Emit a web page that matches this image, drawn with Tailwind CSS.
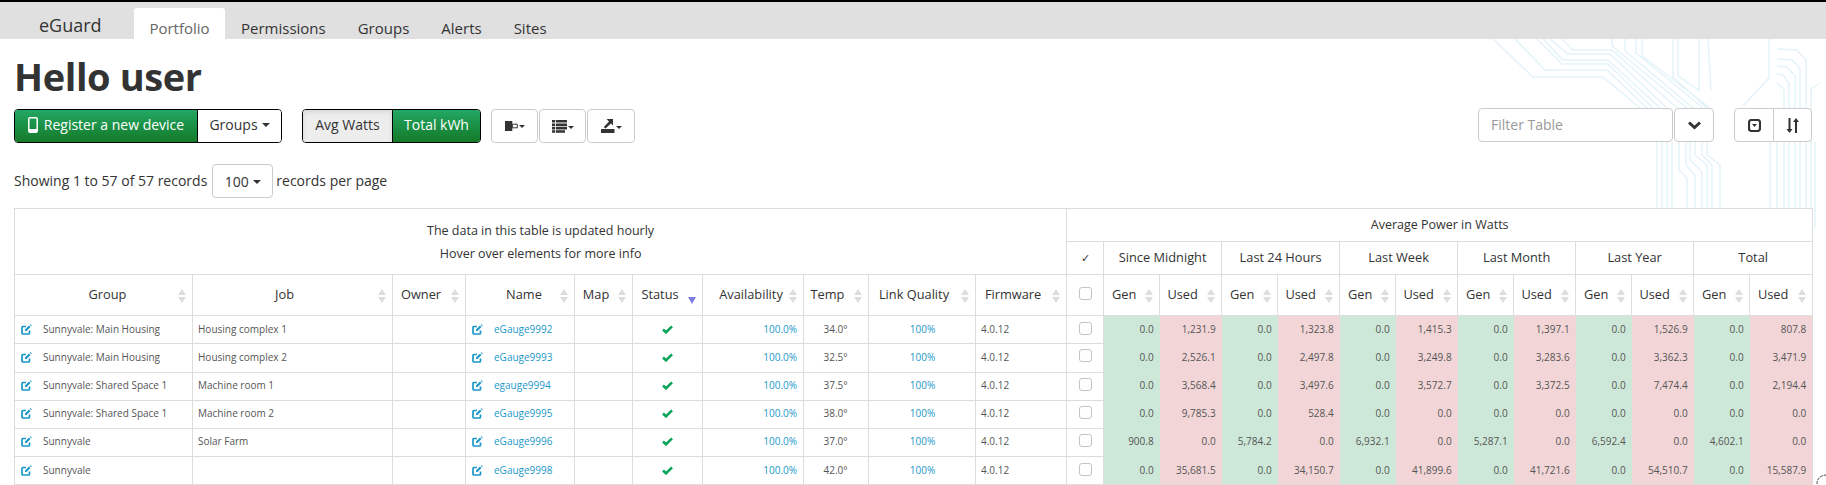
<!DOCTYPE html>
<html><head><meta charset="utf-8"><script src="https://cdn.jsdelivr.net/npm/@tailwindcss/browser@4"></script></head>
<body class="font-['Open_Sans',sans-serif] text-[#333] bg-white overflow-hidden h-[485px] relative">
<svg class="absolute left-0 top-0 w-[1826px] h-[485px] pointer-events-none" viewBox="0 0 1826 485" fill="none" stroke="#e4f3f9" stroke-width="1.500">
<path d="M1493 39L1533 77H1603L1640 108M1515 39L1545 70H1607L1647 108M1537 39L1562 64H1608L1653 108M1543 39L1563 60H1608L1660 108M1550 39L1568 54H1610L1667 108M1562 39L1573 50H1612L1677 108M1612 39V46L1687 108M1625 39V51L1693 108M1636 39V53L1703 108M1642 39V56L1710 108M1673 39V77L1707 108M1678 39V76L1700 91M1699 39V91M1708 39L1711 91M1769 39V78L1743 106M1777 49L1797 50L1806 60V210M1777 59L1792 60L1800 68V210M1777 66L1787 67L1795 76V210M1777 74L1783 75L1789 83V210M1777 83L1784 89V210M1820 83L1811 89V210M1815 142V228M1657 142V210M1662 142V210M1667 142V210M1672 142V210M1679 142V170L1687 178V210M1686 142V165L1695 175V210M1690 142V160L1702 172V210M1695 142V155L1707 165V210M1702 142V155L1712 165V210M1707 142V155L1720 165V210M1770 142V210M1777 142V210"/>
<path stroke="#444" stroke-width="1" stroke-dasharray="3 1" d="M1817 484Q1817 476 1826 475"/>
</svg>
<div class="relative">
<header class="border-t-2 border-black bg-[#e0e0e0] h-[39px] flex items-end">
  <a class="ml-[39px] w-[95px] h-[37px] text-[18px] leading-[24px] pt-[11px] text-[#333]">eGuard</a>
  <nav class="flex items-end text-[15px] h-[31px]">
    <a class="w-[91px] h-[31px] bg-white rounded-t-[3px] text-[#666] text-center pt-[10px] leading-[20px]">Portfolio</a>
    <a class="ml-[16px] pt-[10px] leading-[20px] h-[31px]">Permissions</a>
    <a class="ml-[32px] pt-[10px] leading-[20px] h-[31px]">Groups</a>
    <a class="ml-[32px] pt-[10px] leading-[20px] h-[31px]">Alerts</a>
    <a class="ml-[32px] pt-[10px] leading-[20px] h-[31px]">Sites</a>
  </nav>
</header>
<main class="pl-[14px] pr-[14px]">
  <h1 class="text-[38px] font-bold leading-[40px] text-[#333] mt-[17px] tracking-[-0.4px]">Hello user</h1>
  <div class="flex items-start mt-[13px] text-[14px] h-[34px]">
    <div class="flex h-[34px] rounded-[4px] border border-black">
      <button class="w-[182px] pb-[3px] bg-linear-to-b from-[#22a763] to-[#157a27] text-white flex items-center justify-center gap-[6px] rounded-l-[3px]">
        <svg class="w-[10px] h-[16px]" viewBox="0 0 10 16"><path fill="none" stroke="#fff" stroke-width="1.500" d="M2 .8h6a1.200 1.200 0 0 1 1.200 1.200v12a1.200 1.200 0 0 1-1.200 1.200H2A1.200 1.200 0 0 1 .8 14V2A1.200 1.200 0 0 1 2 .8z"/><path fill="#fff" d="M1 12h8v3.500H1z"/></svg>
        Register a new device</button>
      <button class="flex-1 w-[84px] pb-[3px] bg-white text-[#333] flex items-center justify-center gap-[4px] border-l border-black rounded-r-[3px]">Groups <span class="w-0 h-0 border-x-[4px] border-x-transparent border-t-[4px] border-t-[#333] mt-[1px]"></span></button>
    </div>
    <div class="flex h-[34px] rounded-[4px] border border-black ml-[20px]">
      <button class="w-[89px] pb-[3px] bg-[#ededed] shadow-[inset_0_2px_4px_rgba(0,0,0,0.1)] rounded-l-[3px]">Avg Watts</button>
      <button class="w-[88px] pb-[3px] bg-linear-to-b from-[#22a763] to-[#157a27] text-white border-l border-black rounded-r-[3px]">Total kWh</button>
    </div>
    <div class="flex gap-[1px] ml-[10px]">
      <button class="w-[47px] h-[34px] border border-[#ccc] rounded-[4px] bg-white flex items-center justify-center gap-[1px]"><svg class="w-[13px] h-[10px]" viewBox="0 0 13 10"><path fill="#333" d="M0 0h7.300v10H0z"/><path fill="none" stroke="#333" d="M7.300 3.200h5v3.600h-5z"/></svg><span class="w-0 h-0 border-x-[3.5px] border-x-transparent border-t-[3.5px] border-t-[#333] mt-[1px]"></span></button>
      <button class="w-[47px] h-[34px] border border-[#ccc] rounded-[4px] bg-white flex items-center justify-center gap-[1px]"><svg class="w-[15px] h-[13px]" viewBox="0 0 15 13"><path fill="#333" d="M0 0h3v2.600H0zM3.800 0H15v2.600H3.800zM0 3.400h3V6H0zM3.800 3.400H15V6H3.800zM0 6.800h3v2.600H0zM3.800 6.800H15v2.600H3.800zM0 10.200h3v2.600H0zM3.800 10.200H13v2.600H3.800z"/></svg><span class="w-0 h-0 border-x-[3.5px] border-x-transparent border-t-[3.5px] border-t-[#333] mt-[3px]"></span></button>
      <button class="w-[48px] h-[34px] border border-[#ccc] rounded-[4px] bg-white flex items-center justify-center gap-[1px]"><svg class="w-[14px] h-[14px]" viewBox="0 0 14 14"><path fill="#333" d="M0 10h13.500v4H0zM5.500 0H12v6.500L10 4.500 4.500 9.500 2.800 8 8 2.500z"/></svg><span class="w-0 h-0 border-x-[3.5px] border-x-transparent border-t-[3.5px] border-t-[#333] mt-[3px]"></span></button>
    </div>
    <div class="ml-auto flex h-[34px] -mt-[1px]">
      <div class="w-[195px] h-[34px] border border-[#ccc] rounded-[4px] bg-white text-[#999] pl-[12px] leading-[31px]">Filter Table</div>
      <button class="w-[40px] h-[34px] ml-[1px] border border-[#ccc] rounded-[4px] bg-white flex items-center justify-center"><svg class="w-[13px] h-[9px]" viewBox="0 0 13 9"><path fill="none" stroke="#333" stroke-width="3" d="M1 1.500l5.500 5 5.500-5"/></svg></button>
      <div class="ml-[20px] flex w-[78px] h-[34px] border border-[#ccc] rounded-[4px] bg-white">
        <button class="w-[39px] border-r border-[#ccc] flex items-center justify-center"><svg class="w-[13px] h-[13px]" viewBox="0 0 13 13"><rect x="1" y="1" width="11" height="11" rx="2.500" fill="none" stroke="#333" stroke-width="2.200"/><path fill="#333" d="M4 5h5L6.500 8z"/></svg></button>
        <button class="flex-1 flex items-center justify-center"><svg class="w-[14px] h-[15px]" viewBox="0 0 14 15"><path fill="#333" d="M2.500 0h2v11h2l-3 4-3-4h2zM11 15H9V4H7l3-4 3 4h-2z"/></svg></button>
      </div>
    </div>
  </div>
  <div class="flex items-center mt-[21px] h-[34px] text-[14px]">
    <span class="pb-[2px]">Showing 1 to 57 of 57 records</span>
    <button class="ml-[5px] w-[61px] h-[34px] border border-[#ccc] rounded-[4px] bg-white flex items-center justify-center gap-[4px]">100 <span class="w-0 h-0 border-x-[4px] border-x-transparent border-t-[4px] border-t-[#333] mt-[1px]"></span></button>
    <span class="ml-[3px] pb-[2px]">records per page</span>
  </div>
  <table class="mt-[10px] w-[1798px] table-fixed border-collapse bg-white border border-[#ddd] text-[10px] text-[#555]">
    <colgroup><col class="w-[178px]"><col class="w-[200px]"><col class="w-[73px]"><col class="w-[109px]"><col class="w-[58px]"><col class="w-[70px]"><col class="w-[101px]"><col class="w-[65px]"><col class="w-[107px]"><col class="w-[91px]"><col class="w-[37px]"><col class="w-[56px]"><col class="w-[62px]"><col class="w-[56px]"><col class="w-[62px]"><col class="w-[56px]"><col class="w-[62px]"><col class="w-[56px]"><col class="w-[62px]"><col class="w-[56px]"><col class="w-[62px]"><col class="w-[56px]"><col class="w-[63px]"></colgroup>
    <thead class="text-[12.8px] text-[#333] font-normal">
      <tr class="h-[33px]">
        <th rowspan="2" colspan="10" class="border border-[#ddd] font-normal text-[12.5px] leading-[23px] text-center"><div>The data in this table is updated hourly</div><div>Hover over elements for more info</div></th>
        <th colspan="13" class="border border-[#ddd] font-normal text-[12.5px]">Average Power in Watts</th>
      </tr>
      <tr class="h-[33px]">
        <th class="border border-[#ddd] font-normal text-[11px]">✓</th>
        <th colspan="2" class="border border-[#ddd] font-normal">Since Midnight</th>
        <th colspan="2" class="border border-[#ddd] font-normal">Last 24 Hours</th>
        <th colspan="2" class="border border-[#ddd] font-normal">Last Week</th>
        <th colspan="2" class="border border-[#ddd] font-normal">Last Month</th>
        <th colspan="2" class="border border-[#ddd] font-normal">Last Year</th>
        <th colspan="2" class="border border-[#ddd] font-normal">Total</th>
      </tr>
      <tr class="h-[41px]">
        <th class="border border-[#ddd] font-normal relative pl-[8px]">Group<span class="absolute right-[6px] top-[14px] flex flex-col gap-[2px]"><i class="w-0 h-0 border-x-[4px] border-x-transparent border-b-[6px] border-b-[#ddd]"></i><i class="w-0 h-0 border-x-[4px] border-x-transparent border-t-[6px] border-t-[#ddd]"></i></span></th>
        <th class="border border-[#ddd] font-normal relative pr-[16px]">Job<span class="absolute right-[6px] top-[14px] flex flex-col gap-[2px]"><i class="w-0 h-0 border-x-[4px] border-x-transparent border-b-[6px] border-b-[#ddd]"></i><i class="w-0 h-0 border-x-[4px] border-x-transparent border-t-[6px] border-t-[#ddd]"></i></span></th>
        <th class="border border-[#ddd] font-normal relative pr-[16px]">Owner<span class="absolute right-[6px] top-[14px] flex flex-col gap-[2px]"><i class="w-0 h-0 border-x-[4px] border-x-transparent border-b-[6px] border-b-[#ddd]"></i><i class="w-0 h-0 border-x-[4px] border-x-transparent border-t-[6px] border-t-[#ddd]"></i></span></th>
        <th class="border border-[#ddd] font-normal relative pl-[8px]">Name<span class="absolute right-[6px] top-[14px] flex flex-col gap-[2px]"><i class="w-0 h-0 border-x-[4px] border-x-transparent border-b-[6px] border-b-[#ddd]"></i><i class="w-0 h-0 border-x-[4px] border-x-transparent border-t-[6px] border-t-[#ddd]"></i></span></th>
        <th class="border border-[#ddd] font-normal relative pr-[15px]">Map<span class="absolute right-[6px] top-[14px] flex flex-col gap-[2px]"><i class="w-0 h-0 border-x-[4px] border-x-transparent border-b-[6px] border-b-[#ddd]"></i><i class="w-0 h-0 border-x-[4px] border-x-transparent border-t-[6px] border-t-[#ddd]"></i></span></th>
        <th class="border border-[#ddd] font-normal relative pr-[15px]">Status<span class="absolute right-[6px] top-[22px]"><i class="block w-0 h-0 border-x-[4px] border-x-transparent border-t-[7px] border-t-[#7c7ce0]"></i></span></th>
        <th class="border border-[#ddd] font-normal relative pr-[4px]">Availability<span class="absolute right-[6px] top-[14px] flex flex-col gap-[2px]"><i class="w-0 h-0 border-x-[4px] border-x-transparent border-b-[6px] border-b-[#ddd]"></i><i class="w-0 h-0 border-x-[4px] border-x-transparent border-t-[6px] border-t-[#ddd]"></i></span></th>
        <th class="border border-[#ddd] font-normal relative pr-[17px]">Temp<span class="absolute right-[6px] top-[14px] flex flex-col gap-[2px]"><i class="w-0 h-0 border-x-[4px] border-x-transparent border-b-[6px] border-b-[#ddd]"></i><i class="w-0 h-0 border-x-[4px] border-x-transparent border-t-[6px] border-t-[#ddd]"></i></span></th>
        <th class="border border-[#ddd] font-normal relative pr-[16px]">Link Quality<span class="absolute right-[6px] top-[14px] flex flex-col gap-[2px]"><i class="w-0 h-0 border-x-[4px] border-x-transparent border-b-[6px] border-b-[#ddd]"></i><i class="w-0 h-0 border-x-[4px] border-x-transparent border-t-[6px] border-t-[#ddd]"></i></span></th>
        <th class="border border-[#ddd] font-normal relative pr-[16px]">Firmware<span class="absolute right-[6px] top-[14px] flex flex-col gap-[2px]"><i class="w-0 h-0 border-x-[4px] border-x-transparent border-b-[6px] border-b-[#ddd]"></i><i class="w-0 h-0 border-x-[4px] border-x-transparent border-t-[6px] border-t-[#ddd]"></i></span></th>
        <th class="border border-[#ddd] font-normal"><span class="block mx-auto w-[13px] h-[13px] border border-[#c4c4c4] rounded-[3px] -mt-[4px]"></span></th>
        <th class="border border-[#ddd] font-normal relative pr-[15px]">Gen<span class="absolute right-[6px] top-[14px] flex flex-col gap-[2px]"><i class="w-0 h-0 border-x-[4px] border-x-transparent border-b-[6px] border-b-[#ddd]"></i><i class="w-0 h-0 border-x-[4px] border-x-transparent border-t-[6px] border-t-[#ddd]"></i></span></th>
        <th class="border border-[#ddd] font-normal relative pr-[16px]">Used<span class="absolute right-[6px] top-[14px] flex flex-col gap-[2px]"><i class="w-0 h-0 border-x-[4px] border-x-transparent border-b-[6px] border-b-[#ddd]"></i><i class="w-0 h-0 border-x-[4px] border-x-transparent border-t-[6px] border-t-[#ddd]"></i></span></th>
        <th class="border border-[#ddd] font-normal relative pr-[15px]">Gen<span class="absolute right-[6px] top-[14px] flex flex-col gap-[2px]"><i class="w-0 h-0 border-x-[4px] border-x-transparent border-b-[6px] border-b-[#ddd]"></i><i class="w-0 h-0 border-x-[4px] border-x-transparent border-t-[6px] border-t-[#ddd]"></i></span></th>
        <th class="border border-[#ddd] font-normal relative pr-[16px]">Used<span class="absolute right-[6px] top-[14px] flex flex-col gap-[2px]"><i class="w-0 h-0 border-x-[4px] border-x-transparent border-b-[6px] border-b-[#ddd]"></i><i class="w-0 h-0 border-x-[4px] border-x-transparent border-t-[6px] border-t-[#ddd]"></i></span></th>
        <th class="border border-[#ddd] font-normal relative pr-[15px]">Gen<span class="absolute right-[6px] top-[14px] flex flex-col gap-[2px]"><i class="w-0 h-0 border-x-[4px] border-x-transparent border-b-[6px] border-b-[#ddd]"></i><i class="w-0 h-0 border-x-[4px] border-x-transparent border-t-[6px] border-t-[#ddd]"></i></span></th>
        <th class="border border-[#ddd] font-normal relative pr-[16px]">Used<span class="absolute right-[6px] top-[14px] flex flex-col gap-[2px]"><i class="w-0 h-0 border-x-[4px] border-x-transparent border-b-[6px] border-b-[#ddd]"></i><i class="w-0 h-0 border-x-[4px] border-x-transparent border-t-[6px] border-t-[#ddd]"></i></span></th>
        <th class="border border-[#ddd] font-normal relative pr-[15px]">Gen<span class="absolute right-[6px] top-[14px] flex flex-col gap-[2px]"><i class="w-0 h-0 border-x-[4px] border-x-transparent border-b-[6px] border-b-[#ddd]"></i><i class="w-0 h-0 border-x-[4px] border-x-transparent border-t-[6px] border-t-[#ddd]"></i></span></th>
        <th class="border border-[#ddd] font-normal relative pr-[16px]">Used<span class="absolute right-[6px] top-[14px] flex flex-col gap-[2px]"><i class="w-0 h-0 border-x-[4px] border-x-transparent border-b-[6px] border-b-[#ddd]"></i><i class="w-0 h-0 border-x-[4px] border-x-transparent border-t-[6px] border-t-[#ddd]"></i></span></th>
        <th class="border border-[#ddd] font-normal relative pr-[15px]">Gen<span class="absolute right-[6px] top-[14px] flex flex-col gap-[2px]"><i class="w-0 h-0 border-x-[4px] border-x-transparent border-b-[6px] border-b-[#ddd]"></i><i class="w-0 h-0 border-x-[4px] border-x-transparent border-t-[6px] border-t-[#ddd]"></i></span></th>
        <th class="border border-[#ddd] font-normal relative pr-[16px]">Used<span class="absolute right-[6px] top-[14px] flex flex-col gap-[2px]"><i class="w-0 h-0 border-x-[4px] border-x-transparent border-b-[6px] border-b-[#ddd]"></i><i class="w-0 h-0 border-x-[4px] border-x-transparent border-t-[6px] border-t-[#ddd]"></i></span></th>
        <th class="border border-[#ddd] font-normal relative pr-[15px]">Gen<span class="absolute right-[6px] top-[14px] flex flex-col gap-[2px]"><i class="w-0 h-0 border-x-[4px] border-x-transparent border-b-[6px] border-b-[#ddd]"></i><i class="w-0 h-0 border-x-[4px] border-x-transparent border-t-[6px] border-t-[#ddd]"></i></span></th>
        <th class="border border-[#ddd] font-normal relative pr-[16px]">Used<span class="absolute right-[6px] top-[14px] flex flex-col gap-[2px]"><i class="w-0 h-0 border-x-[4px] border-x-transparent border-b-[6px] border-b-[#ddd]"></i><i class="w-0 h-0 border-x-[4px] border-x-transparent border-t-[6px] border-t-[#ddd]"></i></span></th>
      </tr>
    </thead>
    <tbody>
      <tr class="h-[28px]">
        <td class="border border-[#ddd] pl-[6px]"><span class="flex items-center gap-[11px]"><svg class="w-[11px] h-[11px] shrink-0" viewBox="0 0 11 11"><path fill="none" stroke="#1b97c9" stroke-width="1.700" d="M8.500 6.500V9a1 1 0 0 1-1 1H2a1 1 0 0 1-1-1V3.500a1 1 0 0 1 1-1h3"/><path fill="#1b97c9" d="M4 5.500L8 1.500l1.500 1.500-4 4H4zM8.800.8l.8-.6 1.200 1.200-.7.8z"/></svg>Sunnyvale: Main Housing</span></td>
        <td class="border border-[#ddd] pl-[5px]">Housing complex 1</td><td class="border border-[#ddd]"></td>
        <td class="border border-[#ddd] pl-[6px]"><span class="flex items-center gap-[11px] text-[#1b97c9]"><svg class="w-[11px] h-[11px] shrink-0" viewBox="0 0 11 11"><path fill="none" stroke="#1b97c9" stroke-width="1.700" d="M8.500 6.500V9a1 1 0 0 1-1 1H2a1 1 0 0 1-1-1V3.500a1 1 0 0 1 1-1h3"/><path fill="#1b97c9" d="M4 5.500L8 1.500l1.500 1.500-4 4H4zM8.800.8l.8-.6 1.200 1.200-.7.8z"/></svg>eGauge9992</span></td>
        <td class="border border-[#ddd]"></td>
        <td class="border border-[#ddd]"><svg class="mx-auto w-[11px] h-[9px]" viewBox="0 0 11 9"><path fill="none" stroke="#0aa35a" stroke-width="2.600" d="M1 4.500l3 2.800 6-6"/></svg></td>
        <td class="border border-[#ddd] text-right pr-[6px] text-[#1b97c9]">100.0%</td>
        <td class="border border-[#ddd] text-center pr-[1px]">34.0°</td>
        <td class="border border-[#ddd] text-center pl-[1px] text-[#1b97c9]">100%</td>
        <td class="border border-[#ddd] pl-[5px]">4.0.12</td>
        <td class="border border-[#ddd]"><span class="block mx-auto w-[13px] h-[13px] border border-[#c4c4c4] rounded-[3px] -mt-[3px]"></span></td>
        <td class="text-right pr-[6px] bg-[#cde8d8]">0.0</td><td class="text-right pr-[6px] bg-[#f2d5d7]">1,231.9</td>
        <td class="text-right pr-[6px] bg-[#cde8d8]">0.0</td><td class="text-right pr-[6px] bg-[#f2d5d7]">1,323.8</td>
        <td class="text-right pr-[6px] bg-[#cde8d8]">0.0</td><td class="text-right pr-[6px] bg-[#f2d5d7]">1,415.3</td>
        <td class="text-right pr-[6px] bg-[#cde8d8]">0.0</td><td class="text-right pr-[6px] bg-[#f2d5d7]">1,397.1</td>
        <td class="text-right pr-[6px] bg-[#cde8d8]">0.0</td><td class="text-right pr-[6px] bg-[#f2d5d7]">1,526.9</td>
        <td class="text-right pr-[6px] bg-[#cde8d8]">0.0</td><td class="text-right pr-[6px] bg-[#f2d5d7]">807.8</td>
      </tr>
      <tr class="h-[29px] [&>td]:pb-[2px]">
        <td class="border border-[#ddd] pl-[6px]"><span class="flex items-center gap-[11px]"><svg class="w-[11px] h-[11px] shrink-0" viewBox="0 0 11 11"><path fill="none" stroke="#1b97c9" stroke-width="1.700" d="M8.500 6.500V9a1 1 0 0 1-1 1H2a1 1 0 0 1-1-1V3.500a1 1 0 0 1 1-1h3"/><path fill="#1b97c9" d="M4 5.500L8 1.500l1.500 1.500-4 4H4zM8.800.8l.8-.6 1.200 1.200-.7.8z"/></svg>Sunnyvale: Main Housing</span></td>
        <td class="border border-[#ddd] pl-[5px]">Housing complex 2</td><td class="border border-[#ddd]"></td>
        <td class="border border-[#ddd] pl-[6px]"><span class="flex items-center gap-[11px] text-[#1b97c9]"><svg class="w-[11px] h-[11px] shrink-0" viewBox="0 0 11 11"><path fill="none" stroke="#1b97c9" stroke-width="1.700" d="M8.500 6.500V9a1 1 0 0 1-1 1H2a1 1 0 0 1-1-1V3.500a1 1 0 0 1 1-1h3"/><path fill="#1b97c9" d="M4 5.500L8 1.500l1.500 1.500-4 4H4zM8.800.8l.8-.6 1.200 1.200-.7.8z"/></svg>eGauge9993</span></td>
        <td class="border border-[#ddd]"></td>
        <td class="border border-[#ddd]"><svg class="mx-auto w-[11px] h-[9px]" viewBox="0 0 11 9"><path fill="none" stroke="#0aa35a" stroke-width="2.600" d="M1 4.500l3 2.800 6-6"/></svg></td>
        <td class="border border-[#ddd] text-right pr-[6px] text-[#1b97c9]">100.0%</td>
        <td class="border border-[#ddd] text-center pr-[1px]">32.5°</td>
        <td class="border border-[#ddd] text-center pl-[1px] text-[#1b97c9]">100%</td>
        <td class="border border-[#ddd] pl-[5px]">4.0.12</td>
        <td class="border border-[#ddd]"><span class="block mx-auto w-[13px] h-[13px] border border-[#c4c4c4] rounded-[3px] -mt-[3px]"></span></td>
        <td class="text-right pr-[6px] bg-[#cde8d8]">0.0</td><td class="text-right pr-[6px] bg-[#f2d5d7]">2,526.1</td>
        <td class="text-right pr-[6px] bg-[#cde8d8]">0.0</td><td class="text-right pr-[6px] bg-[#f2d5d7]">2,497.8</td>
        <td class="text-right pr-[6px] bg-[#cde8d8]">0.0</td><td class="text-right pr-[6px] bg-[#f2d5d7]">3,249.8</td>
        <td class="text-right pr-[6px] bg-[#cde8d8]">0.0</td><td class="text-right pr-[6px] bg-[#f2d5d7]">3,283.6</td>
        <td class="text-right pr-[6px] bg-[#cde8d8]">0.0</td><td class="text-right pr-[6px] bg-[#f2d5d7]">3,362.3</td>
        <td class="text-right pr-[6px] bg-[#cde8d8]">0.0</td><td class="text-right pr-[6px] bg-[#f2d5d7]">3,471.9</td>
      </tr>
      <tr class="h-[28px] [&>td]:pb-[2px]">
        <td class="border border-[#ddd] pl-[6px]"><span class="flex items-center gap-[11px]"><svg class="w-[11px] h-[11px] shrink-0" viewBox="0 0 11 11"><path fill="none" stroke="#1b97c9" stroke-width="1.700" d="M8.500 6.500V9a1 1 0 0 1-1 1H2a1 1 0 0 1-1-1V3.500a1 1 0 0 1 1-1h3"/><path fill="#1b97c9" d="M4 5.500L8 1.500l1.500 1.500-4 4H4zM8.800.8l.8-.6 1.200 1.200-.7.8z"/></svg>Sunnyvale: Shared Space 1</span></td>
        <td class="border border-[#ddd] pl-[5px]">Machine room 1</td><td class="border border-[#ddd]"></td>
        <td class="border border-[#ddd] pl-[6px]"><span class="flex items-center gap-[11px] text-[#1b97c9]"><svg class="w-[11px] h-[11px] shrink-0" viewBox="0 0 11 11"><path fill="none" stroke="#1b97c9" stroke-width="1.700" d="M8.500 6.500V9a1 1 0 0 1-1 1H2a1 1 0 0 1-1-1V3.500a1 1 0 0 1 1-1h3"/><path fill="#1b97c9" d="M4 5.500L8 1.500l1.500 1.500-4 4H4zM8.800.8l.8-.6 1.200 1.200-.7.8z"/></svg>egauge9994</span></td>
        <td class="border border-[#ddd]"></td>
        <td class="border border-[#ddd]"><svg class="mx-auto w-[11px] h-[9px]" viewBox="0 0 11 9"><path fill="none" stroke="#0aa35a" stroke-width="2.600" d="M1 4.500l3 2.800 6-6"/></svg></td>
        <td class="border border-[#ddd] text-right pr-[6px] text-[#1b97c9]">100.0%</td>
        <td class="border border-[#ddd] text-center pr-[1px]">37.5°</td>
        <td class="border border-[#ddd] text-center pl-[1px] text-[#1b97c9]">100%</td>
        <td class="border border-[#ddd] pl-[5px]">4.0.12</td>
        <td class="border border-[#ddd]"><span class="block mx-auto w-[13px] h-[13px] border border-[#c4c4c4] rounded-[3px] -mt-[3px]"></span></td>
        <td class="text-right pr-[6px] bg-[#cde8d8]">0.0</td><td class="text-right pr-[6px] bg-[#f2d5d7]">3,568.4</td>
        <td class="text-right pr-[6px] bg-[#cde8d8]">0.0</td><td class="text-right pr-[6px] bg-[#f2d5d7]">3,497.6</td>
        <td class="text-right pr-[6px] bg-[#cde8d8]">0.0</td><td class="text-right pr-[6px] bg-[#f2d5d7]">3,572.7</td>
        <td class="text-right pr-[6px] bg-[#cde8d8]">0.0</td><td class="text-right pr-[6px] bg-[#f2d5d7]">3,372.5</td>
        <td class="text-right pr-[6px] bg-[#cde8d8]">0.0</td><td class="text-right pr-[6px] bg-[#f2d5d7]">7,474.4</td>
        <td class="text-right pr-[6px] bg-[#cde8d8]">0.0</td><td class="text-right pr-[6px] bg-[#f2d5d7]">2,194.4</td>
      </tr>
      <tr class="h-[28px] [&>td]:pb-[2px]">
        <td class="border border-[#ddd] pl-[6px]"><span class="flex items-center gap-[11px]"><svg class="w-[11px] h-[11px] shrink-0" viewBox="0 0 11 11"><path fill="none" stroke="#1b97c9" stroke-width="1.700" d="M8.500 6.500V9a1 1 0 0 1-1 1H2a1 1 0 0 1-1-1V3.500a1 1 0 0 1 1-1h3"/><path fill="#1b97c9" d="M4 5.500L8 1.500l1.500 1.500-4 4H4zM8.800.8l.8-.6 1.200 1.200-.7.8z"/></svg>Sunnyvale: Shared Space 1</span></td>
        <td class="border border-[#ddd] pl-[5px]">Machine room 2</td><td class="border border-[#ddd]"></td>
        <td class="border border-[#ddd] pl-[6px]"><span class="flex items-center gap-[11px] text-[#1b97c9]"><svg class="w-[11px] h-[11px] shrink-0" viewBox="0 0 11 11"><path fill="none" stroke="#1b97c9" stroke-width="1.700" d="M8.500 6.500V9a1 1 0 0 1-1 1H2a1 1 0 0 1-1-1V3.500a1 1 0 0 1 1-1h3"/><path fill="#1b97c9" d="M4 5.500L8 1.500l1.500 1.500-4 4H4zM8.800.8l.8-.6 1.200 1.200-.7.8z"/></svg>eGauge9995</span></td>
        <td class="border border-[#ddd]"></td>
        <td class="border border-[#ddd]"><svg class="mx-auto w-[11px] h-[9px]" viewBox="0 0 11 9"><path fill="none" stroke="#0aa35a" stroke-width="2.600" d="M1 4.500l3 2.800 6-6"/></svg></td>
        <td class="border border-[#ddd] text-right pr-[6px] text-[#1b97c9]">100.0%</td>
        <td class="border border-[#ddd] text-center pr-[1px]">38.0°</td>
        <td class="border border-[#ddd] text-center pl-[1px] text-[#1b97c9]">100%</td>
        <td class="border border-[#ddd] pl-[5px]">4.0.12</td>
        <td class="border border-[#ddd]"><span class="block mx-auto w-[13px] h-[13px] border border-[#c4c4c4] rounded-[3px] -mt-[3px]"></span></td>
        <td class="text-right pr-[6px] bg-[#cde8d8]">0.0</td><td class="text-right pr-[6px] bg-[#f2d5d7]">9,785.3</td>
        <td class="text-right pr-[6px] bg-[#cde8d8]">0.0</td><td class="text-right pr-[6px] bg-[#f2d5d7]">528.4</td>
        <td class="text-right pr-[6px] bg-[#cde8d8]">0.0</td><td class="text-right pr-[6px] bg-[#f2d5d7]">0.0</td>
        <td class="text-right pr-[6px] bg-[#cde8d8]">0.0</td><td class="text-right pr-[6px] bg-[#f2d5d7]">0.0</td>
        <td class="text-right pr-[6px] bg-[#cde8d8]">0.0</td><td class="text-right pr-[6px] bg-[#f2d5d7]">0.0</td>
        <td class="text-right pr-[6px] bg-[#cde8d8]">0.0</td><td class="text-right pr-[6px] bg-[#f2d5d7]">0.0</td>
      </tr>
      <tr class="h-[28px] [&>td]:pb-[2px]">
        <td class="border border-[#ddd] pl-[6px]"><span class="flex items-center gap-[11px]"><svg class="w-[11px] h-[11px] shrink-0" viewBox="0 0 11 11"><path fill="none" stroke="#1b97c9" stroke-width="1.700" d="M8.500 6.500V9a1 1 0 0 1-1 1H2a1 1 0 0 1-1-1V3.500a1 1 0 0 1 1-1h3"/><path fill="#1b97c9" d="M4 5.500L8 1.500l1.500 1.500-4 4H4zM8.800.8l.8-.6 1.200 1.200-.7.8z"/></svg>Sunnyvale</span></td>
        <td class="border border-[#ddd] pl-[5px]">Solar Farm</td><td class="border border-[#ddd]"></td>
        <td class="border border-[#ddd] pl-[6px]"><span class="flex items-center gap-[11px] text-[#1b97c9]"><svg class="w-[11px] h-[11px] shrink-0" viewBox="0 0 11 11"><path fill="none" stroke="#1b97c9" stroke-width="1.700" d="M8.500 6.500V9a1 1 0 0 1-1 1H2a1 1 0 0 1-1-1V3.500a1 1 0 0 1 1-1h3"/><path fill="#1b97c9" d="M4 5.500L8 1.500l1.500 1.500-4 4H4zM8.800.8l.8-.6 1.200 1.200-.7.8z"/></svg>eGauge9996</span></td>
        <td class="border border-[#ddd]"></td>
        <td class="border border-[#ddd]"><svg class="mx-auto w-[11px] h-[9px]" viewBox="0 0 11 9"><path fill="none" stroke="#0aa35a" stroke-width="2.600" d="M1 4.500l3 2.800 6-6"/></svg></td>
        <td class="border border-[#ddd] text-right pr-[6px] text-[#1b97c9]">100.0%</td>
        <td class="border border-[#ddd] text-center pr-[1px]">37.0°</td>
        <td class="border border-[#ddd] text-center pl-[1px] text-[#1b97c9]">100%</td>
        <td class="border border-[#ddd] pl-[5px]">4.0.12</td>
        <td class="border border-[#ddd]"><span class="block mx-auto w-[13px] h-[13px] border border-[#c4c4c4] rounded-[3px] -mt-[3px]"></span></td>
        <td class="text-right pr-[6px] bg-[#cde8d8]">900.8</td><td class="text-right pr-[6px] bg-[#f2d5d7]">0.0</td>
        <td class="text-right pr-[6px] bg-[#cde8d8]">5,784.2</td><td class="text-right pr-[6px] bg-[#f2d5d7]">0.0</td>
        <td class="text-right pr-[6px] bg-[#cde8d8]">6,932.1</td><td class="text-right pr-[6px] bg-[#f2d5d7]">0.0</td>
        <td class="text-right pr-[6px] bg-[#cde8d8]">5,287.1</td><td class="text-right pr-[6px] bg-[#f2d5d7]">0.0</td>
        <td class="text-right pr-[6px] bg-[#cde8d8]">6,592.4</td><td class="text-right pr-[6px] bg-[#f2d5d7]">0.0</td>
        <td class="text-right pr-[6px] bg-[#cde8d8]">4,602.1</td><td class="text-right pr-[6px] bg-[#f2d5d7]">0.0</td>
      </tr>
      <tr class="h-[28px]">
        <td class="border border-[#ddd] pl-[6px]"><span class="flex items-center gap-[11px]"><svg class="w-[11px] h-[11px] shrink-0" viewBox="0 0 11 11"><path fill="none" stroke="#1b97c9" stroke-width="1.700" d="M8.500 6.500V9a1 1 0 0 1-1 1H2a1 1 0 0 1-1-1V3.500a1 1 0 0 1 1-1h3"/><path fill="#1b97c9" d="M4 5.500L8 1.500l1.500 1.500-4 4H4zM8.800.8l.8-.6 1.200 1.200-.7.8z"/></svg>Sunnyvale</span></td>
        <td class="border border-[#ddd] pl-[5px]"></td><td class="border border-[#ddd]"></td>
        <td class="border border-[#ddd] pl-[6px]"><span class="flex items-center gap-[11px] text-[#1b97c9]"><svg class="w-[11px] h-[11px] shrink-0" viewBox="0 0 11 11"><path fill="none" stroke="#1b97c9" stroke-width="1.700" d="M8.500 6.500V9a1 1 0 0 1-1 1H2a1 1 0 0 1-1-1V3.500a1 1 0 0 1 1-1h3"/><path fill="#1b97c9" d="M4 5.500L8 1.500l1.500 1.500-4 4H4zM8.800.8l.8-.6 1.200 1.200-.7.8z"/></svg>eGauge9998</span></td>
        <td class="border border-[#ddd]"></td>
        <td class="border border-[#ddd]"><svg class="mx-auto w-[11px] h-[9px]" viewBox="0 0 11 9"><path fill="none" stroke="#0aa35a" stroke-width="2.600" d="M1 4.500l3 2.800 6-6"/></svg></td>
        <td class="border border-[#ddd] text-right pr-[6px] text-[#1b97c9]">100.0%</td>
        <td class="border border-[#ddd] text-center pr-[1px]">42.0°</td>
        <td class="border border-[#ddd] text-center pl-[1px] text-[#1b97c9]">100%</td>
        <td class="border border-[#ddd] pl-[5px]">4.0.12</td>
        <td class="border border-[#ddd]"><span class="block mx-auto w-[13px] h-[13px] border border-[#c4c4c4] rounded-[3px] -mt-[3px]"></span></td>
        <td class="text-right pr-[6px] bg-[#cde8d8]">0.0</td><td class="text-right pr-[6px] bg-[#f2d5d7]">35,681.5</td>
        <td class="text-right pr-[6px] bg-[#cde8d8]">0.0</td><td class="text-right pr-[6px] bg-[#f2d5d7]">34,150.7</td>
        <td class="text-right pr-[6px] bg-[#cde8d8]">0.0</td><td class="text-right pr-[6px] bg-[#f2d5d7]">41,899.6</td>
        <td class="text-right pr-[6px] bg-[#cde8d8]">0.0</td><td class="text-right pr-[6px] bg-[#f2d5d7]">41,721.6</td>
        <td class="text-right pr-[6px] bg-[#cde8d8]">0.0</td><td class="text-right pr-[6px] bg-[#f2d5d7]">54,510.7</td>
        <td class="text-right pr-[6px] bg-[#cde8d8]">0.0</td><td class="text-right pr-[6px] bg-[#f2d5d7]">15,587.9</td>
      </tr>
    </tbody>
  </table>
</main>
</div>
</body></html>
